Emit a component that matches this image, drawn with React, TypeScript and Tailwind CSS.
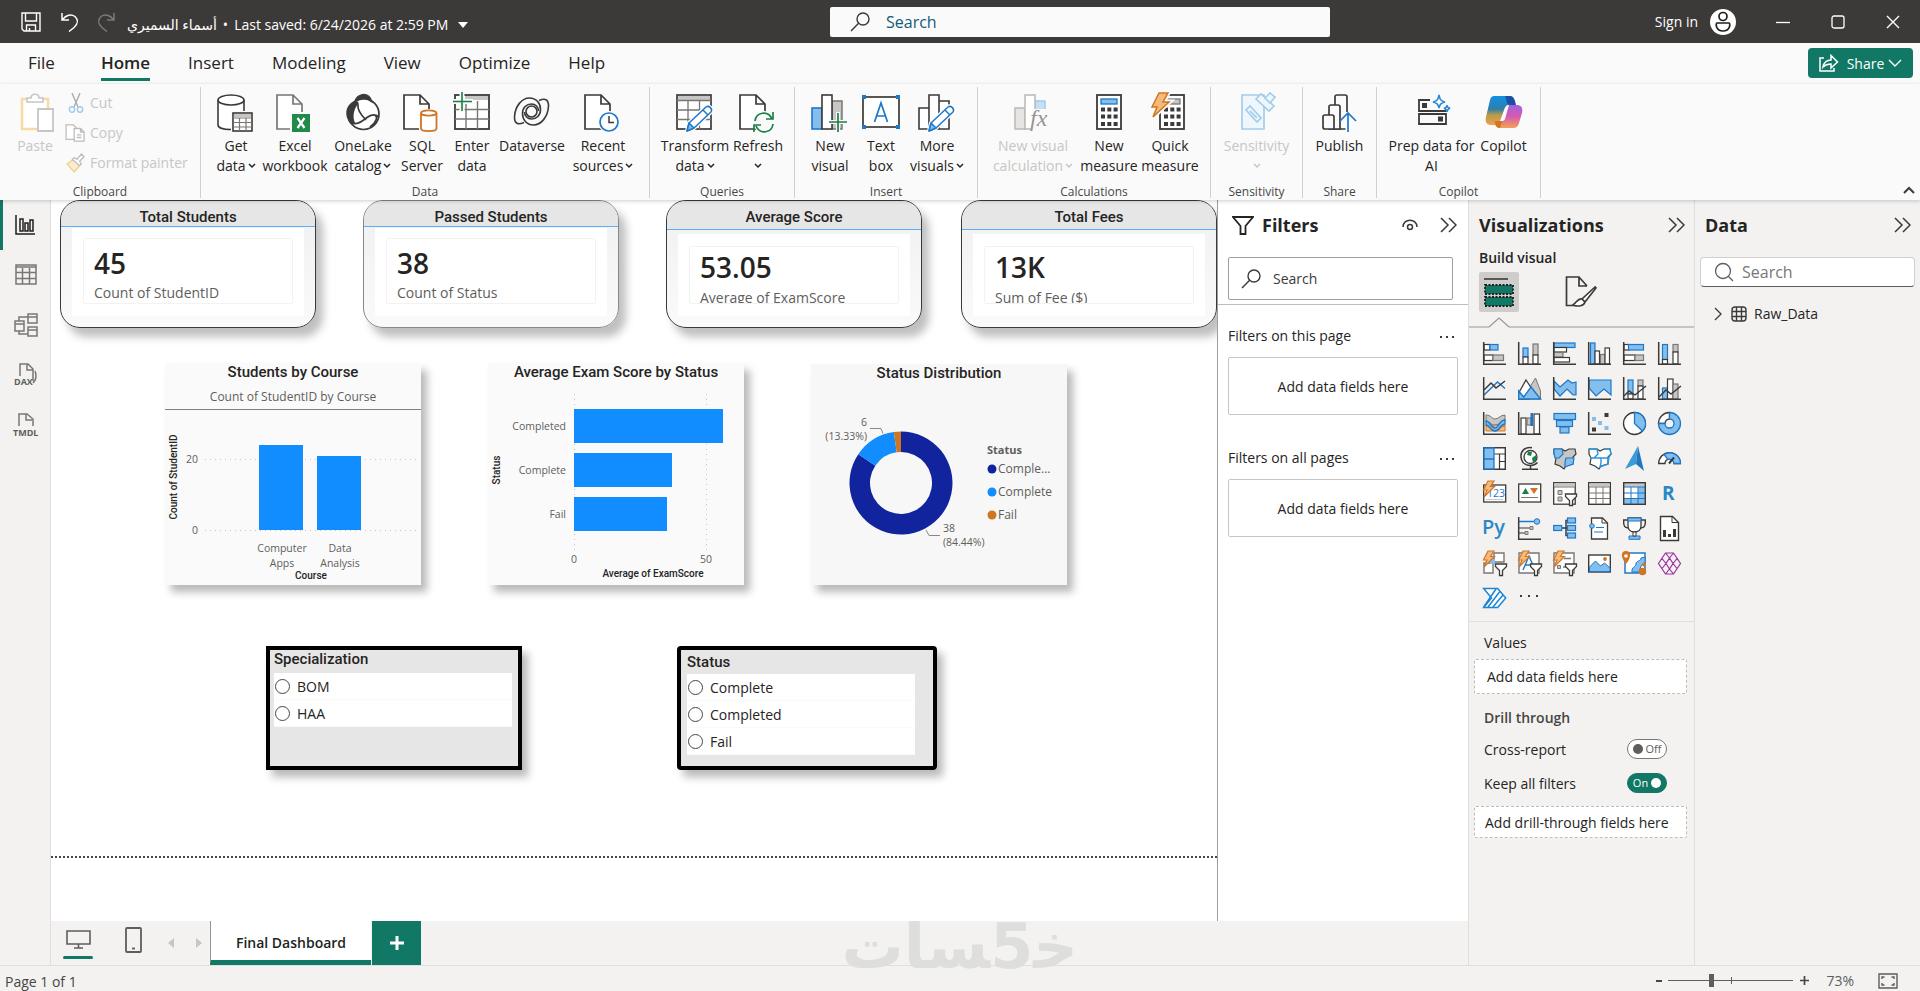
import { ReactNode } from 'react';
import { clsx } from 'clsx';

const DARK = '#3b3a39';
const GRAY = '#797775';
const SOFT = '#c8c6c4';
const BLUE = '#1e78c8';
const SKY = '#83beec';
const GREEN = '#1b7f45';
const ORANGE = '#d07622';
const PEACH = '#f6b97c';

/* ---------- shared icon pieces ---------- */

const Chevron = ({ className }: { className?: string }) => (
    <svg viewBox="0 0 8 6" className={clsx("w-2 h-1.5 inline-block", className)} fill="none" stroke="currentColor" strokeWidth="1.5">
        <path d="M1 1l3 3 3-3" />
    </svg>
);

const DoubleChevron = () => (
    <svg viewBox="0 0 17 16" className="w-[17px] h-4" fill="none" stroke={DARK} strokeWidth="1.5">
        <path d="M1 1l7 7-7 7M9 1l7 7-7 7" />
    </svg>
);

const Magnifier = ({ className }: { className?: string }) => (
    <svg viewBox="0 0 20 20" className={clsx("w-5 h-5 shrink-0", className)} fill="none" stroke={DARK} strokeWidth="1.4">
        <circle cx="13" cy="7" r="6" />
        <path d="M8.6 11.3L1 19" />
    </svg>
);

const Doc = ({ color = DARK }: { color?: string }) => (
    <path d="M1 1h16l9 9v25H1zM17 1v9h9" fill="#fff" stroke={color} strokeWidth="1.7" />
);

const Pencil = () => (
    <g stroke={BLUE} strokeWidth="1.5" strokeLinejoin="round">
        <path d="M11 37l2-8 17-16c3-2 7 2 5 5L18 34z" fill="#fff" stroke="#fff" strokeWidth="4" />
        <path d="M11 37l2-8 17-16c3-2 7 2 5 5L18 34z" fill="#fff" />
        <path d="M11 37l2-8 5 5z" fill={SKY} />
        <path d="M27 16l5 5" />
    </g>
);

const Bolt = () => (
    <path d="M5-1h6L7.500 4.500h4L1 15l3-7H.5z" fill={PEACH} stroke={ORANGE} strokeWidth="1.200" />
);

const MiniFunnel = () => (
    <path d="M12.500 12h11v2.500l-4 4v5h-3v-5l-4-4z" fill="#fff" stroke={DARK} strokeWidth="1.300" />
);

const Axis = () => <path d="M.7 0v22.300H23" fill="none" stroke={DARK} strokeWidth="1.500" />;

interface BarProps {
    x: number;
    y: number;
    w: number;
    h: number;
    tone?: 'blue' | 'gray' | 'white';
}

const Bar = ({ x, y, w, h, tone = 'white' }: BarProps) => (
    <rect
        x={x} y={y} width={w} height={h} strokeWidth="1.2"
        fill={tone === 'blue' ? SKY : tone === 'gray' ? SOFT : '#fff'}
        stroke={tone === 'blue' ? BLUE : tone === 'gray' ? GRAY : DARK}
    />
);

/* ---------- ribbon artwork, 38x40 box ---------- */

const swirl = "M11 28.500C5 31 1.500 30 1.500 23 2 12 9 4 16.500 4 23 4 27.500 9 27.500 15.500c0 6-4 9.500-9 9.500-4 0-7-3-7-7";

const art: Record<string, ReactNode> = {
    getData: (
        <>
            <path d="M1 6v25c0 2.500 5 4.500 13 4.500h1V18h12V6" fill="#fff" stroke={DARK} strokeWidth="1.600" />
            <ellipse cx="14" cy="6" rx="13" ry="5" fill="#fff" stroke={DARK} strokeWidth="1.600" />
            <rect x="14" y="17" width="22" height="20" fill="#fafafa" />
            <rect x="16" y="19" width="19" height="18" fill="#fff" stroke={DARK} strokeWidth="1.600" />
            <path d="M17 21.500h17" stroke={SOFT} strokeWidth="3" />
            <path d="M16 24h19M16 28.500h19M16 33h19M22.500 24v13M29 24v13" stroke={GRAY} strokeWidth="1.200" fill="none" />
        </>
    ),
    excel: (
        <>
            <Doc color={GRAY} />
            <rect x="14" y="18" width="20" height="20" fill="#fafafa" />
            <rect x="16" y="20" width="18" height="18" fill="#1f8a4c" />
            <path d="M21.500 24l7 10M28.500 24l-7 10" stroke="#fff" strokeWidth="2.200" />
        </>
    ),
    oneLake: (
        <>
            <circle cx="19.500" cy="20" r="15.500" fill="#fff" stroke={DARK} strokeWidth="1.700" />
            <path d="M12 6.500C3 9 0 18 4 26c1 3 3 4 7 3-3-7-1-15 4-20z" fill={DARK} />
            <path d="M11 8c1-9 14-11 17 0-5-4-11-4-17 0z" fill={DARK} stroke={DARK} strokeWidth="1.200" />
            <path d="M14 10c-1 6 3 11 8 16M6 28.500c7 3 12-1 17-5 4-3 9-4 12 0M30 21c5 1 2 8-4 12" fill="none" stroke={DARK} strokeWidth="1.700" />
        </>
    ),
    sql: (
        <>
            <Doc />
            <rect x="16" y="15" width="19" height="23" fill="#fafafa" />
            <path d="M18 19v15.500c0 3.500 15.500 3.500 15.500 0V19" fill="#fff" stroke={ORANGE} strokeWidth="1.800" />
            <ellipse cx="25.700" cy="19" rx="7.700" ry="2.700" fill="#fff" stroke={ORANGE} strokeWidth="1.800" />
        </>
    ),
    enter: (
        <>
            <rect x="2" y="1" width="34" height="34" fill="#fff" stroke={DARK} strokeWidth="1.800" />
            <path d="M12 4h23" stroke={SOFT} strokeWidth="4" />
            <path d="M2 15.500h34M2 25h34M13 7v28M24.500 7v28" stroke={GRAY} strokeWidth="1.400" fill="none" />
            <path d="M9-2v20M0 7.500h20" stroke="#fafafa" strokeWidth="5" />
            <path d="M9-2v19M0 7.500h19" stroke={GREEN} strokeWidth="1.600" />
        </>
    ),
    dataverse: (
        <g fill="none" stroke={DARK} strokeWidth="1.600">
            <path d={swirl} />
            <path d={swirl} transform="rotate(180 18.500 17.500)" />
            <circle cx="18.500" cy="17.500" r="5.500" />
        </g>
    ),
    recent: (
        <>
            <Doc />
            <circle cx="25" cy="28" r="11" fill="#fafafa" />
            <circle cx="25" cy="28" r="9" fill="#fff" stroke={BLUE} strokeWidth="1.700" />
            <path d="M25 22v6.500h5" fill="none" stroke={DARK} strokeWidth="1.500" />
        </>
    ),
    transform: (
        <>
            <rect x="1" y="1" width="34" height="34" fill="#fff" stroke={DARK} strokeWidth="1.700" />
            <path d="M2 4h32" stroke={SOFT} strokeWidth="4" />
            <path d="M1 6.500h34M1 16h34M1 25.500h34M12 7v28M23.500 7v28" stroke={GRAY} strokeWidth="1.300" />
            <Pencil />
        </>
    ),
    refresh: (
        <>
            <Doc />
            <circle cx="25" cy="28" r="11" fill="#fafafa" />
            <path d="M16 27c1-9 13-11 17-2M34 18v7h-7M34 30c-1 9-13 11-17 2M15 38v-7h7" fill="none" stroke={GREEN} strokeWidth="1.700" />
        </>
    ),
    newVisual: (
        <>
            <rect x="1" y="14" width="10" height="21" fill={SKY} stroke={BLUE} strokeWidth="1.600" />
            <rect x="21" y="7" width="10" height="28" fill={SOFT} stroke={GRAY} strokeWidth="1.500" />
            <rect x="11" y="1" width="10" height="34" fill="#fff" stroke={DARK} strokeWidth="1.600" />
            <path d="M27 18v20M18 28h18" stroke="#fafafa" strokeWidth="4" />
            <path d="M27 19v19M18 28h18" stroke={GREEN} strokeWidth="1.700" />
        </>
    ),
    textBox: (
        <>
            <rect x="1" y="3" width="36" height="30" fill="#fff" stroke={DARK} strokeWidth="1.700" />
            <path d="M0 1h4v4H0zM34 1h4v4h-4zM0 31h4v4H0zM34 31h4v4h-4z" fill={BLUE} />
            <path d="M12.500 28L19 9l6.500 19M14.500 22h9" fill="none" stroke={BLUE} strokeWidth="1.700" />
        </>
    ),
    moreVisuals: (
        <>
            <path d="M1 14h10v21H1zM21 7h10v28H21zM11 1h10v34H11z" fill="#fff" stroke={DARK} strokeWidth="1.600" />
            <Pencil />
        </>
    ),
    newCalc: (
        <>
            <rect x="1" y="14" width="10" height="21" fill="#e6e5e4" stroke="#bebcba" strokeWidth="1.600" />
            <rect x="21" y="7" width="10" height="20" fill="#c5e0f5" stroke="#9ccbee" strokeWidth="1.500" />
            <rect x="11" y="1" width="10" height="34" fill="#fff" stroke="#bebcba" strokeWidth="1.600" />
            <rect x="18" y="15" width="18" height="22" fill="#fafafa" />
            <text x="16" y="32" fontSize="24" fontStyle="italic" fontFamily="Liberation Serif" fill="#979593">fx</text>
        </>
    ),
    newMeasure: (
        <>
            <rect x="7" y="1" width="24" height="34" fill="#fff" stroke={DARK} strokeWidth="1.800" />
            <rect x="11" y="5" width="16" height="5" fill={SKY} stroke={BLUE} strokeWidth="1.300" />
            <path d="M11 15.500h17M11 22.500h17M11 30h17" stroke={DARK} strokeWidth="4" strokeDasharray="4 2.300" />
        </>
    ),
    quick: (
        <>
            <rect x="9" y="1" width="24" height="34" fill="#fff" stroke={DARK} strokeWidth="1.800" />
            <rect x="13" y="5" width="16" height="5" fill={SOFT} stroke={GRAY} strokeWidth="1.300" />
            <path d="M13 15.500h17M13 22.500h17M13 30h17" stroke={DARK} strokeWidth="4" strokeDasharray="4 2.300" />
            <path d="M8-1h9l-5 9h6L2 23l4-10H1z" fill={PEACH} stroke="#fafafa" strokeWidth="5" />
            <path d="M8-1h9l-5 9h6L2 23l4-10H1z" fill={PEACH} stroke={ORANGE} strokeWidth="1.500" />
        </>
    ),
    sensitivity: (
        <g fill="#eff7fd" stroke="#a3cdec" strokeWidth="1.700">
            <path d="M4 1h22v34H4z" />
            <path d="M8 16l4-4 11 12-4 4zM12 17l7 7" />
            <path d="M18 5l5-5 13 12-5 5z" />
            <path d="M27 4l5-5 5 4-5 6z" />
        </g>
    ),
    publish: (
        <>
            <g fill="#fafafa" stroke={DARK} strokeWidth="1.700">
                <path d="M14 35V3c0-1 1-2 2-2h8c1 0 2 1 2 2v32z" />
                <path d="M8 35V13c0-1 1-2 2-2h7c1 0 2 1 2 2v22z" />
                <path d="M2 33V23c0-1 1-2 2-2h7c1 0 2 1 2 2v12H4c-1 0-2-1-2-2z" />
            </g>
            <path d="M27 18v20" stroke="#fafafa" strokeWidth="5" />
            <path d="M27 38V19M19 27l8-8 8 8" fill="none" stroke={BLUE} strokeWidth="1.700" />
        </>
    ),
    prep: (
        <>
            <path d="M17 6H6v11h27v-3M6 20h27v10H6z" fill="none" stroke={DARK} strokeWidth="1.800" />
            <rect x="9" y="9" width="5" height="5" fill={DARK} />
            <rect x="25" y="22.500" width="5" height="5" fill={DARK} />
            <path d="M26 1c1 5 2 6 6 7-4 1-5 2-6 6-1-4-2-5-6-6 4-1 5-2 6-7zM34 11c0 2 1 3 3 3-2 1-3 2-3 4 0-2-1-3-3-4 2 0 3-1 3-3z" fill="#fff" stroke="#2b88d8" strokeWidth="1.500" />
        </>
    ),
    copilot: (
        <>
            <defs>
                <linearGradient id="cp-left" x1="0" y1="0" x2="0" y2="1">
                    <stop offset="0" stopColor="#118fe6" />
                    <stop offset=".45" stopColor="#2f7fa8" />
                    <stop offset=".65" stopColor="#b59c4c" />
                    <stop offset="1" stopColor="#f0a04b" />
                </linearGradient>
                <linearGradient id="cp-right" x1="0" y1="0" x2="0" y2="1">
                    <stop offset="0" stopColor="#a35fe0" />
                    <stop offset=".5" stopColor="#d65bb0" />
                    <stop offset="1" stopColor="#f2a255" />
                </linearGradient>
            </defs>
            <path d="M9 2h15c3 0 4 2 5 5l1 4h-6c-3 0-4 2-5 5l-3 9c-1 4-3 6-6 6H6c-5 0-6-4-5-8L5 6c1-3 2-4 4-4z" fill="url(#cp-left)" />
            <path d="M20 2h5c3 0 4 2 5 5l1 4h-6c-4 0-3-5-5-9z" fill="#1a4fa6" />
            <path d="M24 11h8c5 0 6 4 5 8l-3 10c-1 4-3 5-6 5H15c-3 0-4-2-5-5l-1-2h5c3 0 4-2 5-5l2-7c1-3 1-4 3-4z" fill="url(#cp-right)" />
            <path d="M10 27h7l-2 7c-4 0-5-3-5-7z" fill={ORANGE} />
            <path d="M21 13c1-2 2-2 3-2l-4 14c-1 2-2 2-5 2z" fill="#fafafa" />
        </>
    ),
};

const RibbonArt = ({ name }: { name: string }) => (
    <svg viewBox="0 -2 38 42" className="w-[38px] h-[42px] mb-[2px] overflow-visible shrink-0">{art[name]}</svg>
);

interface Tool {
    icon: string;
    lines: string[];
    width: string;
    menu?: boolean;
    disabled?: boolean;
}

const groups: { label: string; width: string; tools: Tool[] }[] = [
    {
        label: "Data", width: "w-[449px]", tools: [
            { icon: 'getData', lines: ["Get", "data"], width: "w-14", menu: true },
            { icon: 'excel', lines: ["Excel", "workbook"], width: "w-[62px]" },
            { icon: 'oneLake', lines: ["OneLake", "catalog"], width: "w-[74px]", menu: true },
            { icon: 'sql', lines: ["SQL", "Server"], width: "w-11" },
            { icon: 'enter', lines: ["Enter", "data"], width: "w-14" },
            { icon: 'dataverse', lines: ["Dataverse"], width: "w-16" },
            { icon: 'recent', lines: ["Recent", "sources"], width: "w-[78px]", menu: true },
        ],
    },
    {
        label: "Queries", width: "w-[145px]", tools: [
            { icon: 'transform', lines: ["Transform", "data"], width: "w-[72px]", menu: true },
            { icon: 'refresh', lines: ["Refresh", ""], width: "w-[54px]", menu: true },
        ],
    },
    {
        label: "Insert", width: "w-[183px]", tools: [
            { icon: 'newVisual', lines: ["New", "visual"], width: "w-[54px]" },
            { icon: 'textBox', lines: ["Text", "box"], width: "w-12" },
            { icon: 'moreVisuals', lines: ["More", "visuals"], width: "w-16", menu: true },
        ],
    },
    {
        label: "Calculations", width: "w-[233px]", tools: [
            { icon: 'newCalc', lines: ["New visual", "calculation"], width: "w-[90px]", menu: true, disabled: true },
            { icon: 'newMeasure', lines: ["New", "measure"], width: "w-[62px]" },
            { icon: 'quick', lines: ["Quick", "measure"], width: "w-[60px]" },
        ],
    },
    {
        label: "Sensitivity", width: "w-[92px]", tools: [
            { icon: 'sensitivity', lines: ["Sensitivity", ""], width: "w-[84px]", menu: true, disabled: true },
        ],
    },
    {
        label: "Share", width: "w-[74px]", tools: [
            { icon: 'publish', lines: ["Publish"], width: "w-16" },
        ],
    },
    {
        label: "Copilot", width: "w-[164px]", tools: [
            { icon: 'prep', lines: ["Prep data for", "AI"], width: "w-[90px]" },
            { icon: 'copilot', lines: ["Copilot"], width: "w-[54px]" },
        ],
    },
];

const ToolButton = ({ tool }: { tool: Tool }) => (
    <button
        disabled={tool.disabled}
        className={clsx(
            "flex flex-col items-center shrink-0 whitespace-nowrap text-[14px] leading-5",
            tool.width,
            tool.disabled ? "text-[#c8c6c4]" : "text-[#252423]"
        )}
    >
        <RibbonArt name={tool.icon} />
        {tool.lines.map((line, i) => (
            <span key={i} className="flex items-center gap-[2px] h-5">
                {line}
                {tool.menu && i === tool.lines.length - 1 && <Chevron />}
            </span>
        ))}
    </button>
);

const TitleBar = () => (
    <header className="flex items-center h-[43px] bg-[#3b3a39] text-white">
        <div className="flex items-center flex-[809] pl-[21px]">
            <button aria-label="Save" className="mr-5">
                <svg viewBox="0 0 20 20" className="w-5 h-5" fill="none" stroke="#fff" strokeWidth="1.400">
                    <path d="M1 1h18v18H3l-2-2zM4.500 1v8h11V1M5.500 19v-6h9v6M8.500 19v-3" />
                </svg>
            </button>
            <button aria-label="Undo" className="mr-[18px]">
                <svg viewBox="0 0 18 20" className="w-[18px] h-5" fill="none" stroke="#fff" strokeWidth="1.500">
                    <path d="M1 1v7h7M1.500 7.500C5 3 10 1.500 14 4.500c4 4 3 7-1 11L8 19.500" />
                </svg>
            </button>
            <button aria-label="Redo" className="mr-3" disabled>
                <svg viewBox="0 0 18 20" className="w-[18px] h-5" fill="none" stroke="#7b7a78" strokeWidth="1.500">
                    <path d="M17 1v7h-7M16.500 7.500C13 3 8 1.500 4 4.500c-4 4-3 7 1 11l5 4" />
                </svg>
            </button>
            <button className="flex items-center gap-[6px] pt-[6px] text-[14px] whitespace-nowrap">
                <span dir="rtl">أسماء السميري</span>
                <span>•</span>
                <span>Last saved: 6/24/2026 at 2:59 PM</span>
                <svg viewBox="0 0 10 6" className="w-[10px] h-[6px] ml-1"><path d="M0 0h10L5 6z" fill="#fff" /></svg>
            </button>
        </div>
        <label className="flex items-center w-[500px] h-[30px] px-5 gap-4 bg-[#fafafa] rounded-xs">
            <Magnifier />
            <input aria-label="Search" placeholder="Search" className="w-full bg-transparent outline-none text-[16px] placeholder:text-[#125a78]" />
        </label>
        <div className="flex items-center justify-end flex-[570] pr-5">
            <button className="flex items-center gap-3 text-[14px]">
                Sign in
                <svg viewBox="0 0 26 26" className="w-[26px] h-[26px]" fill="none" stroke="#201f1e" strokeWidth="1.700">
                    <circle cx="13" cy="13" r="13" fill="#fff" stroke="none" />
                    <circle cx="13" cy="7.500" r="4" />
                    <path d="M7 14h12c1.500 0 1.500 8-6 8s-7.500-8-6-8z" />
                </svg>
            </button>
            <button aria-label="Minimize" className="ml-10">
                <svg viewBox="0 0 14 14" className="w-[14px] h-[14px]" stroke="#fff" strokeWidth="1.300"><path d="M0 7.500h14" /></svg>
            </button>
            <button aria-label="Maximize" className="ml-[41px]">
                <svg viewBox="0 0 14 14" className="w-[14px] h-[14px]" stroke="#fff" strokeWidth="1.300" fill="none"><rect x="1" y="1" width="12" height="12" rx="2" /></svg>
            </button>
            <button aria-label="Close" className="ml-[41px]">
                <svg viewBox="0 0 14 14" className="w-[14px] h-[14px]" stroke="#fff" strokeWidth="1.400"><path d="M1 1l12 12M13 1L1 13" /></svg>
            </button>
        </div>
    </header>
);

const menuTabs = ["File", "Home", "Insert", "Modeling", "View", "Optimize", "Help"];

const MenuBar = () => (
    <nav className="flex items-start h-[41px] pl-7 pr-[7px] gap-[38px] bg-[#fafafa]">
        {menuTabs.map((tab) => (
            <button
                key={tab}
                className={clsx(
                    "h-[38px] pt-1 text-[17px] leading-8 text-[#252423] border-b-[3px]",
                    tab === "File" && "mr-2",
                    tab === "Home" ? "border-[#117865] font-semibold" : "border-transparent"
                )}
            >
                {tab}
            </button>
        ))}
        <button className="flex items-center justify-center gap-2 ml-auto mt-[5px] w-[105px] h-[30px] rounded-sm bg-[#117865] text-white text-[14px]">
            <svg viewBox="0 0 20 18" className="w-5 h-[18px]" fill="none" stroke="#fff" strokeWidth="1.500">
                <path d="M5 4H1v13h14v-3M4 13c1-5 4-7 8-7V1.500L18.500 8 12 14v-4c-4 0-6 1-8 3z" />
            </svg>
            <span className="flex items-center gap-1">
                Share
                <svg viewBox="0 0 14 8" className="w-[14px] h-2" fill="none" stroke="#fff" strokeWidth="1.400"><path d="M1 1l6 6 6-6" /></svg>
            </span>
        </button>
    </nav>
);

const GroupLabel = ({ children }: { children: ReactNode }) => (
    <h2 className="text-center text-[12px] leading-3 text-[#484644]">{children}</h2>
);

const ClipboardGroup = () => (
    <section className="flex flex-col w-[201px] border-r border-[#d2d0ce] text-[#c8c6c4]">
        <div className="flex flex-1 pl-[17px]">
            <button disabled className="flex flex-col items-center w-9 pt-[5px] text-[14px] leading-5">
                <svg viewBox="-3 -2 38 42" className="w-[38px] h-[42px] mb-[2px] shrink-0" fill="none">
                    <path d="M3 5h26v30H3z" fill="#fff" stroke="#f5dca6" strokeWidth="2.500" />
                    <path d="M8 8V4h4c0-5 8-5 8 0h4v4z" fill="#fff" stroke={SOFT} strokeWidth="1.600" />
                    <path d="M19 15h15v22H19z" fill="#fff" stroke={SOFT} strokeWidth="1.800" />
                </svg>
                Paste
            </button>
            <div className="flex flex-col ml-[14px] pt-px text-[14px] leading-5">
                <button disabled className="flex items-center gap-[5px] h-[30px]">
                    <svg viewBox="0 0 18 20" className="w-[18px] h-5" fill="none" strokeWidth="1.400">
                        <path d="M5 0l6 14M13 0L7 14" stroke={GRAY} opacity=".6" />
                        <circle cx="5" cy="16.500" r="2.700" stroke="#9ccbee" />
                        <circle cx="13" cy="16.500" r="2.700" stroke="#9ccbee" />
                    </svg>
                    Cut
                </button>
                <button disabled className="flex items-center gap-[5px] h-[30px]">
                    <svg viewBox="0 0 20 20" className="w-[18px] h-5 overflow-visible" fill="#fff" stroke="#bebcba" strokeWidth="1.400">
                        <path d="M-1 1h8l3 3v13H-1z" />
                        <path d="M8 5h7l4 4v10H8zM15 5v4h4M11 12h5M11 15h5" />
                    </svg>
                    Copy
                </button>
                <button disabled className="flex items-center gap-[5px] h-[30px] whitespace-nowrap">
                    <svg viewBox="0 0 20 20" className="w-[18px] h-5 overflow-visible" fill="#fff" strokeWidth="1.400">
                        <path d="M0 11l7-5 7 7-6 7z" stroke="#f0cf93" fill="#fbeccd" />
                        <path d="M6 6l2-2 3 2 5-6 3 3-5 5 2 3-2 2z" stroke="#bebcba" />
                    </svg>
                    Format painter
                </button>
            </div>
        </div>
        <GroupLabel>Clipboard</GroupLabel>
    </section>
);

const Ribbon = () => (
    <div className="relative z-10 flex h-[116px] pt-[3px] pb-[2px] bg-[#fafafa] shadow-[0_1px_4px_rgba(0,0,0,0.2)]">
        <ClipboardGroup />
        {groups.map((group) => (
            <section key={group.label} className={clsx("flex flex-col border-r border-[#d2d0ce]", group.width)}>
                <div className="flex flex-1 justify-center pt-[5px]">
                    {group.tools.map((tool) => <ToolButton key={tool.icon} tool={tool} />)}
                </div>
                <GroupLabel>{group.label}</GroupLabel>
            </section>
        ))}
        <button aria-label="Collapse ribbon" className="self-end ml-auto mr-[5px] mb-1">
            <svg viewBox="0 0 12 8" className="w-3 h-2" fill="none" stroke={DARK} strokeWidth="2"><path d="M1 7l5-5 5 5" /></svg>
        </button>
    </div>
);

/* ---------- left rail ---------- */

const railIcons: { name: string; icon: ReactNode }[] = [
    { name: "Report view", icon: <path d="M2 2v19h19M6 6h3v12H6zM11 10h3v8h-3zM16 7h3v11h-3z" stroke="#201f1e" strokeWidth="1.500" /> },
    { name: "Table view", icon: <path d="M2 2h20v19H2zM2 4h20M2 9.500h20M2 15.500h20M8.500 5v16M15.500 5v16" /> },
    { name: "Model view", icon: <path d="M1 8h9v10H1zM1 11h9M14 1h9v9h-9zM14 4h9M14 14h9v9h-9zM14 17h9M5 8V4h9M5 18v3h9" /> },
    {
        name: "DAX query view", icon: (
            <>
                <path d="M6 13V1h8l5 5v12M13 1v6h6M21 8c2 5 1 9-2 12" />
                <text x="0" y="22" fontSize="9" fontWeight="700" fill="#605e5c" stroke="none">DAX</text>
            </>
        ),
    },
    {
        name: "TMDL view", icon: (
            <>
                <path d="M5 13V1h8l6 5v7M12 1v6h6" />
                <text x="-1" y="23" fontSize="9" fontWeight="700" fill="#605e5c" stroke="none">TMDL</text>
            </>
        ),
    },
];

const Rail = () => (
    <nav className="flex flex-col w-[51px] shrink-0 bg-[#f3f2f1] border-r border-[#e1dfdd]">
        {railIcons.map((item, i) => (
            <button
                key={item.name}
                aria-label={item.name}
                className={clsx(
                    "flex items-center justify-center h-[50px] pr-[2px] border-l-[3px]",
                    i === 0 ? "border-[#117865]" : "border-transparent"
                )}
            >
                <svg viewBox="0 0 24 24" className="w-6 h-6 overflow-visible" fill="none" stroke="#797775" strokeWidth="1.500">{item.icon}</svg>
            </button>
        ))}
    </nav>
);

/* ---------- report canvas ---------- */

interface KpiProps {
    title: string;
    value: string;
    label: string;
    margin: string;
    tall?: boolean;
    border?: string;
}

const KpiCard = ({ title, value, label, margin, tall, border = "border-[#3b3a39]" }: KpiProps) => (
    <article className={clsx(
        "flex flex-col flex-1 h-32 border rounded-[20px] overflow-hidden bg-linear-to-b from-[#f0f0f0] to-[#fafafa] shadow-[7px_9px_8px_rgba(0,0,0,0.25)]",
        margin, border
    )}>
        <h3 className={clsx(
            "text-center shrink-0 bg-[#e6e6e6] border-b border-[#58aefb] text-[15px] leading-[18px] font-medium text-[#252423] font-[Roboto,sans-serif] pt-[7px]",
            tall ? "h-[29px]" : "h-[26px]"
        )}>
            {title}
        </h3>
        <div className={clsx("flex-1 min-h-0 mx-[11px] mb-[11px] px-[11px] bg-white", tall ? "mt-1 pt-3 pb-3" : "mt-px pt-[10px] pb-3")}>
            <div className="h-full px-[10px] border border-[#f3f2f1] rounded-xs overflow-hidden">
                <p className={clsx("font-semibold text-[28px] leading-9 text-[#252423]", tall ? "pt-[2px] pb-[3px]" : "pt-[6px] pb-[2px]")}>{value}</p>
                <p className="text-[14px] leading-5 text-[#605e5c] whitespace-nowrap">{label}</p>
            </div>
        </div>
    </article>
);

const tile = "w-64 bg-[#fafafa] shadow-[6px_7px_8px_rgba(0,0,0,0.28)]";
const tileTitle = "text-center text-[15px] leading-[18px] font-medium text-[#252423] font-[Roboto,sans-serif]";
const axisTitle = { fontFamily: 'Roboto, sans-serif', fontWeight: 500, fontSize: 10, fill: '#252423' };

const CourseChart = () => (
    <article className={clsx(tile, "flex flex-col")}>
        <h3 className={tileTitle}>Students by Course</h3>
        <p className="mt-2 pb-1 text-center text-[12px] leading-4 text-[#605e5c] border-b border-[#808080]">Count of StudentID by Course</p>
        <svg viewBox="0 0 256 175" className="w-full" fontSize="10.500" fill="#605e5c">
            <path d="M40 49.500h213M40 120.500h213" stroke="#c8c6c4" strokeDasharray="1 4" />
            <rect x="94" y="35" width="44" height="85" fill="#118dff" />
            <rect x="152" y="46" width="44" height="74" fill="#118dff" />
            <text x="33" y="53" textAnchor="end">20</text>
            <text x="33" y="124" textAnchor="end">0</text>
            <text x="117" y="142" textAnchor="middle">Computer</text>
            <text x="117" y="157" textAnchor="middle">Apps</text>
            <text x="175" y="142" textAnchor="middle">Data</text>
            <text x="175" y="157" textAnchor="middle">Analysis</text>
            <text x="146" y="169" textAnchor="middle" style={axisTitle}>Course</text>
            <text transform="translate(12 67) rotate(-90)" textAnchor="middle" style={axisTitle}>Count of StudentID</text>
        </svg>
    </article>
);

const scores = [
    { status: "Completed", y: 28, length: 149 },
    { status: "Complete", y: 72, length: 98 },
    { status: "Fail", y: 116, length: 93 },
];

const ScoreChart = () => (
    <article className={clsx(tile, "flex flex-col")}>
        <h3 className={tileTitle}>Average Exam Score by Status</h3>
        <svg viewBox="0 0 256 204" className="w-full" fontSize="10.500" fill="#605e5c">
            <path d="M86.500 13v156M218.500 13v156" stroke="#c8c6c4" strokeDasharray="1 4" />
            {scores.map((s) => (
                <g key={s.status}>
                    <rect x="86" y={s.y} width={s.length} height="34" fill="#118dff" />
                    <text x="78" y={s.y + 21} textAnchor="end">{s.status}</text>
                </g>
            ))}
            <text x="86" y="182" textAnchor="middle">0</text>
            <text x="218" y="182" textAnchor="middle">50</text>
            <text x="165" y="196" textAnchor="middle" style={axisTitle}>Average of ExamScore</text>
            <text transform="translate(12 89) rotate(-90)" textAnchor="middle" style={axisTitle}>Status</text>
        </svg>
    </article>
);

const slices = [
    { from: 0, to: 304, color: '#12239e' },
    { from: 304, to: 352, color: '#118dff' },
    { from: 352, to: 360, color: ORANGE },
];

const legend = [
    { label: "Comple...", color: '#12239e', y: 87 },
    { label: "Complete", color: '#118dff', y: 110 },
    { label: "Fail", color: ORANGE, y: 133 },
];

// ring segment between two clockwise angles, starting at 12 o'clock
const ringPath = (from: number, to: number, outer = 51.5, inner = 31) => {
    const at = (deg: number, r: number) => {
        const a = ((deg - 90) * Math.PI) / 180;
        return `${(r * Math.cos(a)).toFixed(2)} ${(r * Math.sin(a)).toFixed(2)}`;
    };
    const large = to - from > 180 ? 1 : 0;
    return `M${at(from, outer)}A${outer} ${outer} 0 ${large} 1 ${at(to, outer)}L${at(to, inner)}A${inner} ${inner} 0 ${large} 0 ${at(from, inner)}Z`;
};

const StatusChart = () => (
    <article className="flex flex-col w-64 mt-px bg-[#f7f7f7] shadow-[6px_7px_8px_rgba(0,0,0,0.28)]">
        <h3 className={tileTitle}>Status Distribution</h3>
        <svg viewBox="0 0 256 203" className="w-full" fontSize="10.500" fill="#605e5c">
            <g transform="translate(90 101)">
                {slices.map((s) => <path key={s.color} d={ringPath(s.from, s.to)} fill={s.color} />)}
            </g>
            <path d="M59 46.500h11l2 5M115 148l3 5.500h11" fill="none" stroke="#8a8886" />
            <text x="56" y="44" textAnchor="end">6</text>
            <text x="56" y="58" textAnchor="end">(13.33%)</text>
            <text x="132" y="150">38</text>
            <text x="132" y="164">(84.44%)</text>
            <text x="176" y="72" fontSize="11" fontWeight="700">Status</text>
            {legend.map((item) => (
                <g key={item.label}>
                    <circle cx="181" cy={item.y} r="4.500" fill={item.color} />
                    <text x="187" y={item.y + 4} fontSize="12">{item.label}</text>
                </g>
            ))}
        </svg>
    </article>
);

interface SlicerProps {
    title: string;
    options: string[];
    className: string;
    listClass: string;
}

const Slicer = ({ title, options, className, listClass }: SlicerProps) => (
    <fieldset className={clsx("h-[124px] border-4 border-black bg-[#e6e6e6] shadow-[6px_7px_8px_rgba(0,0,0,0.28)]", className)}>
        <div className="text-[15px] leading-[18px] font-medium text-[#252423] font-[Roboto,sans-serif]">{title}</div>
        <div className={clsx("bg-white", listClass)}>
            {options.map((option) => (
                <label key={option} className="flex items-center gap-[7px] h-[27px] pl-px text-[14px] text-[#252423] border-b border-[#fafafa]">
                    <input type="radio" name={title} className="appearance-none w-[15px] h-[15px] rounded-full border border-[#484644]" />
                    {option}
                </label>
            ))}
        </div>
    </fieldset>
);

const Canvas = () => (
    <div className="flex-1 min-w-0 overflow-hidden bg-white">
        <div className="flex pl-[9px]">
            <KpiCard title="Total Students" value="45" label="Count of StudentID" margin="" />
            <KpiCard title="Passed Students" value="38" label="Count of Status" margin="ml-[47px]" border="border-[#8a8886]" />
            <KpiCard title="Average Score" value="53.05" label="Average of ExamScore" margin="ml-[47px]" tall />
            <KpiCard title="Total Fees" value="13K" label="Sum of Fee ($)" margin="ml-[39px]" tall />
        </div>
        <div className="flex gap-[67px] mt-[35px] pl-[114px]">
            <CourseChart />
            <ScoreChart />
            <StatusChart />
        </div>
        <div className="flex mt-[61px] pl-[215px]">
            <Slicer title="Specialization" options={["BOM", "HAA"]} className="w-64 px-1" listClass="mt-[5px] mr-[2px]" />
            <Slicer title="Status" options={["Complete", "Completed", "Fail"]} className="w-[260px] ml-[155px] px-[6px] pt-[3px] rounded-sm" listClass="mt-[3px] mr-3" />
        </div>
        <div className="mt-[86px] border-t-2 border-dotted border-[#484644]" />
    </div>
);

const FilterSection = ({ title }: { title: string }) => (
    <section className="px-[10px]">
        <div className="flex items-center justify-between h-5 text-[14px] text-[#252423]">
            <h3>{title}</h3>
            <button aria-label={`${title} options`} className="pt-1 pr-1">
                <svg viewBox="0 0 14 2" className="w-[14px] h-[2px]" fill={DARK}><path d="M0 0h2v2H0zM6 0h2v2H6zM12 0h2v2h-2z" /></svg>
            </button>
        </div>
        <div className="flex items-center justify-center mt-3 mb-8 h-[58px] border border-[#c8c6c4] rounded-xs text-[14px] text-[#252423]">
            Add data fields here
        </div>
    </section>
);

const FiltersPane = () => (
    <aside className="w-[251px] shrink-0 bg-white border-l border-[#a19f9d]">
        <div className="flex items-center h-12 pt-[2px] pl-[14px] pr-[11px]">
            <svg viewBox="0 0 22 20" className="w-[22px] h-5" fill="none" stroke="#252423" strokeWidth="1.800"><path d="M1 2h20l-7.500 9v8h-5v-8z" /></svg>
            <h2 className="ml-2 text-[18px] font-bold text-[#252423]">Filters</h2>
            <button aria-label="Show filters" className="ml-auto mr-[22px]">
                <svg viewBox="0 0 16 12" className="w-4 h-3" fill="none" stroke={DARK} strokeWidth="1.500"><path d="M1 8c0-9 14-9 14 0" /><circle cx="8" cy="8" r="2.500" /></svg>
            </button>
            <button aria-label="Collapse filters"><DoubleChevron /></button>
        </div>
        <div className="pl-[10px] pr-[15px] pt-[9px] pb-1 border-b border-[#bebbb8]">
            <label className="flex items-center gap-3 h-[43px] px-3 border border-[#a19f9d] rounded-xs">
                <Magnifier />
                <input aria-label="Search filters" placeholder="Search" className="w-full outline-none text-[14px] placeholder:text-[#3b3a39]" />
            </label>
        </div>
        <div className="pt-5">
            <FilterSection title="Filters on this page" />
            <FilterSection title="Filters on all pages" />
        </div>
    </aside>
);

/* ---------- visual gallery, 23x23 icons ---------- */

const visuals: { name: string; icon: ReactNode }[] = [
    { name: "Stacked bar", icon: <><Bar x={1} y={2.5} w={6} h={5.5} /><Bar x={7} y={2.5} w={8} h={5.5} tone="blue" /><Bar x={1} y={13} w={9} h={5.5} /><Bar x={10} y={13} w={10.5} h={5.5} tone="gray" /><Axis /></> },
    { name: "Stacked column", icon: <><Bar x={5} y={6} w={5} h={9} tone="blue" /><Bar x={5} y={15} w={5} h={7} /><Bar x={15} y={2} w={5} h={11} tone="gray" /><Bar x={15} y={13} w={5} h={9} /><Axis /></> },
    { name: "Clustered bar", icon: <><Bar x={1} y={1} w={21} h={4.5} tone="blue" /><Bar x={1} y={5.5} w={12.5} h={4.5} /><Bar x={1} y={10.5} w={9} h={4.5} tone="gray" /><Bar x={1} y={15.5} w={15.5} h={4.5} /><Axis /></> },
    { name: "Clustered column", icon: <><Bar x={2.5} y={1} w={4.5} h={21} tone="blue" /><Bar x={7} y={9} w={4.5} h={13} /><Bar x={12.5} y={12.5} w={4.5} h={9.5} tone="gray" /><Bar x={17} y={6} w={4.5} h={16} /><Axis /></> },
    { name: "100% stacked bar", icon: <><Bar x={1} y={2.5} w={5} h={5.5} /><Bar x={5.5} y={2.5} w={15} h={5.5} tone="blue" /><Bar x={1} y={13} w={11} h={5.5} /><Bar x={12} y={13} w={8.5} h={5.5} tone="gray" /><Axis /></> },
    { name: "100% stacked column", icon: <><Bar x={4.5} y={2.5} w={5} h={15} tone="blue" /><Bar x={4.5} y={17.5} w={5} h={4.5} /><Bar x={15} y={2.5} w={5} h={7.5} tone="gray" /><Bar x={15} y={10} w={5} h={12} /><Axis /></> },
    { name: "Line", icon: <><path d="M1 18L14.500 5 22 11.500" fill="none" stroke={BLUE} strokeWidth="1.500" /><path d="M1 13l7-7 5 5 9-7" fill="none" stroke={DARK} strokeWidth="1.500" /><Axis /></> },
    { name: "Area", icon: <><path d="M10 13l7.500-12L22.500 14v8H10z" fill={SOFT} stroke={GRAY} /><path d="M.7 16L8 3l6 9-3 10H.7z" fill="#fff" stroke={DARK} strokeWidth="1.300" /><path d="M.7 22V14l5 6L13 10l9.500 12z" fill={SKY} stroke={BLUE} strokeWidth="1.400" /></> },
    { name: "Stacked area", icon: <><path d="M1 4l6 6 8-7 4 3 4-1v13l-3 0-6-6-7 7-6-7z" fill={SKY} stroke={BLUE} strokeWidth="1.200" /><Axis /></> },
    { name: "100% area", icon: <><path d="M1 3h22v15l-7-6-8 7-7-8z" fill={SKY} stroke={BLUE} strokeWidth="1.200" /><Axis /></> },
    { name: "Line and stacked column", icon: <><Bar x={5} y={3} w={5} h={14} tone="blue" /><Bar x={5} y={17} w={5} h={5} /><Bar x={15} y={3} w={5} h={6} tone="gray" /><Bar x={15} y={9} w={5} h={13} /><path d="M1 19l5-5 6 4 11-9" fill="none" stroke={DARK} strokeWidth="1.400" /><Axis /></> },
    { name: "Line and clustered column", icon: <><Bar x={4.5} y={11} w={5} h={11} tone="blue" /><Bar x={9.5} y={2} w={5.5} h={20} /><Bar x={15} y={7} w={5} h={15} tone="gray" /><path d="M1 20l7-7 5 4 10-8" fill="none" stroke={DARK} strokeWidth="1.400" /><Axis /></> },
    { name: "Ribbon", icon: <><path d="M3 13h19v6H3z" fill={PEACH} stroke={ORANGE} /><path d="M3 14c4 0 4 5 9 5s5-5 10-5" fill="none" stroke={ORANGE} /><path d="M3 3c5 0 6 4 9 4 4 0 5-4 10-4v6c-5 0-5 4-10 4-4 0-4-3-9-3z" fill={SOFT} stroke={GRAY} /><path d="M3 9c4 0 5 7 9 7s4-8 10-8v4c-5 0-5 7-10 7s-5-6-9-6z" fill={SKY} stroke={BLUE} strokeWidth="1.300" /><Axis /></> },
    { name: "Waterfall", icon: <><Bar x={3} y={6} w={5} h={16} /><Bar x={9} y={6} w={4} h={7} tone="gray" /><path d="M12.500 1h2.500v13h-2.500z" fill={BLUE} /><Bar x={16} y={2} w={5.5} h={20} /><Axis /></> },
    { name: "Funnel", icon: <><Bar x={1} y={1.5} w={21.5} h={6} tone="blue" /><Bar x={3.5} y={8.5} w={16} h={6} tone="blue" /><Bar x={7} y={15} w={9} h={6} tone="blue" /></> },
    { name: "Scatter", icon: <><path d="M16.500 1h4v4h-4zM4 15.500h4v4H4z" fill={DARK} /><path d="M4 5h4v4H4zM10 9h4v4h-4zM16.500 14h4v4h-4z" fill={SKY} /><Axis /></> },
    { name: "Pie", icon: <><circle cx="11.500" cy="11.500" r="11" fill="#fff" stroke={DARK} strokeWidth="1.300" /><path d="M11.500.5a11 11 0 018 18.500l-8-7.500z" fill={SKY} stroke={BLUE} strokeWidth="1.300" /></> },
    { name: "Donut", icon: <><path d="M11.500.5v6.500a4.500 4.500 0 00-4.500 4.500H.5a11 11 0 0111-11z" fill="#fff" stroke={DARK} strokeWidth="1.300" /><path d="M11.500.5a11 11 0 11-11 11H7a4.500 4.500 0 104.500-4.500z" fill={SKY} stroke={BLUE} strokeWidth="1.300" /></> },
    { name: "Treemap", icon: <><path d="M.7.7h21.600v21.600H.7z" fill="#fff" stroke={DARK} strokeWidth="1.400" /><path d="M1 1h10v21H1zM1 12h10" fill={SKY} stroke={BLUE} strokeWidth="1.300" /><path d="M11.500 7h11M16.500 7v15M16.500 14.500h6" stroke={DARK} strokeWidth="1.200" /></> },
    { name: "Map", icon: <><circle cx="12.500" cy="10" r="6.500" fill="#fff" stroke={DARK} strokeWidth="1.300" /><path d="M10 5l4 0-1 4-4-1zM14 11l4-3v5l-3 3z" fill={GREEN} /><path d="M14 .7C7-.5 2.500 4 3 10c.5 6 5 8.500 9.500 8.500 3 0 5-1 7-3M12.500 18.500V22M4 22.300h16" fill="none" stroke={DARK} strokeWidth="1.500" /></> },
    { name: "Filled map", icon: <><path d="M1 2h8l3 2 4-2h6l1 5-3 3v7l-7 2-2 3-4-3-5-2 1-6-2-4z" fill={SOFT} stroke={DARK} strokeWidth="1.200" /><path d="M1 2h8l1 5-4 4-4 0-1-5zM13 11h8l-1 6-8 3v-5z" fill={SKY} stroke={BLUE} strokeWidth="1.200" /></> },
    { name: "Shape map", icon: <><path d="M1 2h8l3 2 4-2h6l1 5-3 3v7l-7 2-2 3-4-3-5-2 1-6-2-4z" fill="#fff" stroke={DARK} strokeWidth="1.200" /><path d="M1 2h8l1 5-4 4-4 0M6 11h15M13 11v5l-1 4 8-3 1-7 2-3-1-5h-6" fill="none" stroke="#2b95e0" strokeWidth="1.400" /></> },
    { name: "Azure map", icon: <><path d="M15-1L2 22l11-5z" fill="#3a9bd9" /><path d="M15-1l6 25-8-7z" fill="#2277bd" /></> },
    { name: "Gauge", icon: <><path d="M.7 16.500a10.800 10.800 0 0121.600 0H16a4.500 4.500 0 00-9 0z" fill="#fff" stroke={DARK} strokeWidth="1.400" /><path d="M6 7.500a10.800 10.800 0 0116.500 9H16a4.500 4.500 0 00-6-4z" fill={SKY} stroke={BLUE} strokeWidth="1.300" /><path d="M11 16.500l5-6" stroke={DARK} strokeWidth="2" /></> },
    { name: "Card", icon: <><rect x=".7" y="3" width="22" height="17" fill="#fff" stroke={DARK} strokeWidth="1.300" /><text x="4" y="15" fontSize="10.500" fill={BLUE}>123</text><path d="M3 17.500h17" stroke={SOFT} /><Bolt /></> },
    { name: "KPI", icon: <><rect x=".7" y="2" width="22" height="18" fill="#fff" stroke={DARK} strokeWidth="1.300" /><path d="M7.500 6l3.500 6H4z" fill={GREEN} /><path d="M12 6h8l-4 6z" fill={ORANGE} /><path d="M3 15.500h17" stroke={GRAY} /></> },
    { name: "Slicer", icon: <><rect x=".7" y=".7" width="21.500" height="21.500" fill="#fff" stroke={DARK} strokeWidth="1.300" /><path d="M1 3h21" stroke={SOFT} strokeWidth="3" /><path d="M1 5h21" stroke={GRAY} /><path d="M5 8.500h4v4H5zM5 15h4v4H5z" fill={SOFT} stroke={GRAY} /><MiniFunnel /></> },
    { name: "Table", icon: <><rect x=".7" y=".7" width="21.600" height="21.600" fill="#fff" stroke={DARK} strokeWidth="1.400" /><path d="M1 3h21" stroke={SOFT} strokeWidth="3" /><path d="M1 5h21M1 11h21M1 16.500h21M8 5v17M15 5v17" stroke={GRAY} /></> },
    { name: "Matrix", icon: <><path d="M1 3h21" stroke={SOFT} strokeWidth="4" /><path d="M1 5h14v12H1z" fill="#fff" /><path d="M15 5h7.300v17.300H1V17h14z" fill={SKY} /><path d="M1 5h21M1 11h21M1 16.500h21M8 5v17M15 5v17" stroke={BLUE} /><rect x=".7" y=".7" width="21.600" height="21.600" fill="none" stroke={DARK} strokeWidth="1.400" /></> },
    { name: "R script", icon: <text x="4" y="18" fontSize="19" fontWeight="700" fill="#2b88c8">R</text> },
    { name: "Python script", icon: <text x="-1" y="17" fontSize="20" fontWeight="600" fill="#2b88c8">Py</text> },
    { name: "Key influencers", icon: <><path d="M1 4.500h15" stroke={BLUE} strokeWidth="1.500" /><circle cx="19" cy="4.500" r="2.800" fill={SKY} stroke={BLUE} /><path d="M1 11h11M1 16h7" stroke={GRAY} strokeWidth="1.300" /><path d="M12 9.500h3v3h-3zM7 14.500h3v3H7z" fill={SOFT} stroke={GRAY} /><Axis /></> },
    { name: "Decomposition tree", icon: <><path d="M9 11h6M15 3.500h-2v15h2M12 11h3" fill="none" stroke={DARK} strokeWidth="1.500" /><Bar x={0.7} y={8.5} w={8} h={5} tone="blue" /><Bar x={14.5} y={1} w={8} h={5} tone="blue" /><Bar x={14.5} y={8.5} w={8} h={5} tone="blue" /><Bar x={14.5} y={16} w={8} h={5} tone="blue" /></> },
    { name: "Narrative", icon: <><path d="M3.500 1h11l5 5v16h-16z" fill="#fff" stroke={DARK} strokeWidth="1.300" /><path d="M14 1v5h5" fill="none" stroke={DARK} /><circle cx="4" cy="9" r="2.300" fill={SKY} stroke={BLUE} /><path d="M8 10.500h8M6 15h9" stroke={BLUE} strokeWidth="1.200" /></> },
    { name: "Goals", icon: <><path d="M5 3H.7v3c0 4 2 5 5 5M18 3h4.300v3c0 4-2 5-5 5" fill="none" stroke={DARK} strokeWidth="1.400" /><path d="M5 1h13v8c0 4-3 6-6.500 6S5 13 5 9z" fill="#fff" stroke={DARK} strokeWidth="1.300" /><path d="M5 1h13v3H5zM6 19h11v3.300H6z" fill={SKY} stroke={BLUE} /><path d="M10 15h3v4h-3z" fill="#fff" stroke={DARK} /></> },
    { name: "Paginated report", icon: <><path d="M2.500-.5h12l6 6v18h-18z" fill="#fff" stroke={DARK} strokeWidth="1.400" /><path d="M14-.5v6h6" fill="none" stroke={DARK} /><path d="M5 13h3v7H5zM10 17h3v3h-3zM15 12h3v8h-3z" fill={DARK} /></> },
    { name: "Button slicer", icon: <><path d="M11 1h10v9H11zM1 11h9v10H1z" fill="#fff" stroke={GRAY} strokeWidth="1.400" /><path d="M7 7h5v5H7z" fill={SKY} /><Bolt /><MiniFunnel /></> },
    { name: "Text slicer", icon: <><path d="M1 1h20v20H1z" fill="#fff" stroke={GRAY} strokeWidth="1.400" /><path d="M5 18L11 4l6 14M7.500 13h7" fill="none" stroke={BLUE} strokeWidth="1.400" /><Bolt /><MiniFunnel /></> },
    { name: "List slicer", icon: <><path d="M1 1h20v20H1z" fill="#fff" stroke={GRAY} strokeWidth="1.400" /><path d="M11 6.500h7M10 15h4" stroke={GRAY} strokeWidth="1.300" /><path d="M4.500 13.500h3v3h-3z" fill={SOFT} stroke={GRAY} /><Bolt /><MiniFunnel /></> },
    { name: "Image", icon: <><rect x=".7" y="3" width="21.600" height="17" fill="#fff" stroke={DARK} strokeWidth="1.400" /><path d="M1.500 19.500V15l6-6 5 5 4-3 5.500 5v3.500z" fill={SKY} stroke={BLUE} /><circle cx="17" cy="7" r="1.900" fill={ORANGE} /></> },
    { name: "ArcGIS map", icon: <><path d="M2 1h20v20H2z" fill="#fff" stroke={BLUE} strokeWidth="1.500" /><path d="M9 20c-1-5 4-5 4-8 0-4 5-2 5-6l4-1v6l-4 3-2 6z" fill={SKY} stroke={BLUE} /><path d="M3-1c-6 0-5 7 0 13 5-6 6-13 0-13z" fill={ORANGE} /><circle cx="3" cy="4" r="1.800" fill="#fff" /><circle cx="19.500" cy="19.500" r="3.700" fill={ORANGE} /><circle cx="21" cy="12.500" r="1.900" fill={ORANGE} /></> },
    { name: "Power Apps", icon: <path d="M7.500 1h8l7 10.500-7 10.500h-8L.5 11.500zM11.500 6L7.500 1M11.500 6l4-5M11.500 17l-4 5M11.500 17l4 5M11.500 6L8 11.500l3.500 5.500 3.500-5.500zM15 11.500l4-5M8 11.500L4 6.500M15 11.500l4 5M8 11.500l-4 5" fill="none" stroke="#9b30a0" strokeWidth="1.200" /> },
    { name: "Power Automate", icon: <path d="M.7 1.500h14l8 9.500-8 9.500h-14L8.500 11zM5 20L16.500 5M10 20L20 8M.7 20L13 2" fill="#fff" stroke="#1a86d8" strokeWidth="1.500" /> },
    { name: "More visuals", icon: <path d="M2 8h2v2H2zM10 8h2v2h-2zM18 8h2v2h-2z" fill={DARK} /> },
];

const DropWell = ({ children, className }: { children: ReactNode; className: string }) => (
    <div className={clsx("flex items-center ml-[5px] mr-[7px] border border-dashed border-[#bebbb8] rounded-xs bg-white text-[14px] whitespace-nowrap", className)}>
        {children}
    </div>
);

const Toggle = ({ label, on }: { label: string; on?: boolean }) => (
    <label className="flex items-center justify-between h-[34px] pl-[15px] pr-[27px] text-[14px]">
        {label}
        <span className="relative flex">
            <input
                type="checkbox"
                defaultChecked={on}
                className="appearance-none w-10 h-5 rounded-full border border-[#797775] bg-white checked:bg-[#117865] checked:border-[#117865]"
            />
            <span className={clsx(
                "absolute inset-0 flex items-center justify-center gap-[3px] text-[11px] pointer-events-none",
                on ? "flex-row-reverse text-white" : "text-[#605e5c]"
            )}>
                <span className={clsx("w-[10px] h-[10px] rounded-full", on ? "bg-white" : "bg-[#605e5c]")} />
                {on ? "On" : "Off"}
            </span>
        </span>
    </label>
);

const VisualizationsPane = () => (
    <aside className="w-[226px] shrink-0 bg-[#f3f2f1] border-l border-[#e1dfdd] text-[#252423]">
        <div className="flex items-center justify-between h-12 pt-[2px] pl-[10px] pr-[9px]">
            <h2 className="text-[18px] font-bold">Visualizations</h2>
            <button aria-label="Collapse visualizations"><DoubleChevron /></button>
        </div>
        <h3 className="pl-[10px] text-[14px] leading-5 font-semibold">Build visual</h3>
        <div className="flex gap-[46px] pl-[10px] mt-1">
            <button aria-label="Build visual" className="w-10 h-10 p-[5px] bg-[#cfcdcb] rounded-xs">
                <svg viewBox="0 0 30 30" className="w-[30px] h-[30px]">
                    <path d="M0 2h24" stroke={DARK} strokeWidth="1.600" />
                    <path d="M1 8h28v9H1zM1 20h28v9H1z" fill="#117865" stroke="#201f1e" strokeWidth="1.800" strokeDasharray="2 1.500" />
                </svg>
            </button>
            <button aria-label="Format visual" className="w-10 h-10">
                <svg viewBox="0 0 32 32" className="w-8 h-8" fill="#fff" stroke={DARK} strokeWidth="1.700">
                    <path d="M12 29.500H1.500V1H14l8 9M14 1v9h8" fill="none" />
                    <path d="M30 11L17 23l3 3 11-14zM17 23c-4-1-5 3-9 6 5 2 11 1 12-3z" />
                </svg>
            </button>
        </div>
        <svg viewBox="0 0 225 12" className="w-full h-3 mt-1" fill="none" stroke="#979593" strokeWidth="1.200">
            <path d="M0 11h20l10-9 10 9h185" />
        </svg>
        <div className="grid grid-cols-6 w-[210px] ml-2 mt-2 pb-[5px]">
            {visuals.map((v) => (
                <button key={v.name} aria-label={v.name} className="flex items-center justify-center h-[35px]">
                    <svg viewBox="0 0 23 23" className="w-[23px] h-[23px] overflow-visible">{v.icon}</svg>
                </button>
            ))}
        </div>
        <div className="pt-[11px] border-t border-[#e1dfdd]">
            <h3 className="pl-[15px] text-[14px] leading-5">Values</h3>
            <DropWell className="h-[35px] mt-[6px] px-3">Add data fields here</DropWell>
            <h3 className="pl-[15px] mt-[14px] text-[14px] leading-5 font-semibold text-[#484644]">Drill through</h3>
            <div className="mt-1">
                <Toggle label="Cross-report" />
                <Toggle label="Keep all filters" on />
            </div>
            <DropWell className="h-8 mt-[6px] px-[10px]">Add drill-through fields here</DropWell>
        </div>
    </aside>
);

const DataPane = () => (
    <aside className="w-[226px] shrink-0 bg-[#f3f2f1] border-l border-[#e1dfdd] text-[#252423]">
        <div className="flex items-center justify-between h-12 pt-[2px] pl-[10px] pr-[9px]">
            <h2 className="text-[18px] font-bold">Data</h2>
            <button aria-label="Collapse data"><DoubleChevron /></button>
        </div>
        <label className="flex items-center gap-2 h-[30px] mt-[9px] ml-[5px] mr-[5px] px-[13px] bg-white border border-[#d2d0ce] border-b-[#605e5c] rounded-sm">
            <svg viewBox="0 0 20 20" className="w-5 h-5 shrink-0" fill="none" stroke="#605e5c" strokeWidth="1.300"><circle cx="9" cy="9" r="7.500" /><path d="M14.500 14.500l4.500 4.500" /></svg>
            <input aria-label="Search data" placeholder="Search" className="w-full bg-transparent outline-none text-[16px] placeholder:text-[#797775]" />
        </label>
        <button className="flex items-center gap-[9px] pl-[19px] mt-[17px] text-[14px] leading-5">
            <svg viewBox="0 0 8 14" className="w-2 h-[14px]" fill="none" stroke={DARK} strokeWidth="1.300"><path d="M1 1l6 6-6 6" /></svg>
            <span className="flex items-center gap-[7px]">
                <svg viewBox="0 0 16 16" className="w-4 h-4" fill="none" stroke={DARK} strokeWidth="1.400"><rect x="1" y="1" width="14" height="14" rx="3" /><path d="M1 5.500h14M1 10.500h14M5.500 1v14M10.500 1v14" /></svg>
                Raw_Data
            </span>
        </button>
    </aside>
);

const PageTabs = () => (
    <div className="relative flex h-11 bg-[#f3f2f1]">
        <button aria-label="Desktop layout" className="flex flex-col items-center w-[30px] ml-3 mt-2">
            <svg viewBox="0 0 25 20" className="w-[25px] h-5" fill="none" stroke="#605e5c" strokeWidth="1.600"><path d="M1 2h23v13H1zM12.500 15v4M8 19h9" /></svg>
            <span className="w-full h-[3px] mt-[7px] rounded-xs bg-[#117865]" />
        </button>
        <button aria-label="Phone layout" className="self-start mt-[6px] ml-8">
            <svg viewBox="0 0 17 26" className="w-[17px] h-[26px]" fill="none" stroke="#605e5c" strokeWidth="1.800"><rect x="1" y="1" width="15" height="24" rx="1" /><path d="M7 21.500h3" /></svg>
        </button>
        <button aria-label="Previous page" disabled className="ml-[26px]">
            <svg viewBox="0 0 6 10" className="w-[6px] h-[10px]"><path d="M6 0v10L0 5z" fill={SOFT} /></svg>
        </button>
        <button aria-label="Next page" disabled className="ml-[22px]">
            <svg viewBox="0 0 6 10" className="w-[6px] h-[10px]"><path d="M0 0v10l6-5z" fill={SOFT} /></svg>
        </button>
        <button className="w-[161px] ml-2 pt-1 bg-white border-l border-l-[#979593] border-b-[5px] border-b-[#117865] text-[14px] font-semibold text-[#201f1e]">
            Final Dashboard
        </button>
        <button aria-label="New page" className="flex items-center justify-center w-[49px] ml-px bg-[#117865]">
            <svg viewBox="0 0 14 14" className="w-[14px] h-[14px]" stroke="#fff" strokeWidth="3"><path d="M7 0v14M0 7h14" /></svg>
        </button>
        <span dir="rtl" className="absolute right-[390px] -top-[14px] z-10 text-[62px] leading-[80px] font-bold whitespace-nowrap text-[#dededd] font-[DejaVu_Sans,sans-serif] pointer-events-none">
            {'خ\u200d5\u200dسات'}
        </span>
    </div>
);

const StatusBar = () => (
    <footer className="flex items-center h-[26px] pl-[5px] pr-[22px] bg-[#f3f2f1] border-t border-[#e1dfdd] text-[14px] leading-5 text-[#484644]">
        <span className="mt-[6px]">Page 1 of 1</span>
        <div className="flex items-center ml-auto mt-1 text-[#605e5c]">
            <button aria-label="Zoom out" className="w-3"><span className="block w-[6px] h-[2px] bg-[#484644]" /></button>
            <span className="relative flex items-center">
                <input
                    type="range" min="0" max="100" defaultValue="34" aria-label="Zoom level"
                    className="appearance-none w-[125px] h-px bg-[#605e5c] [&::-webkit-slider-thumb]:appearance-none [&::-webkit-slider-thumb]:w-[5px] [&::-webkit-slider-thumb]:h-[13px] [&::-webkit-slider-thumb]:bg-[#605e5c]"
                />
                <span className="absolute left-1/2 w-px h-[7px] bg-[#605e5c]" />
            </span>
            <button aria-label="Zoom in" className="ml-[7px]">
                <svg viewBox="0 0 9 9" className="w-[9px] h-[9px]" stroke="#484644" strokeWidth="1.700"><path d="M4.500 0v9M0 4.500h9" /></svg>
            </button>
            <span className="ml-[17px]">73%</span>
            <button aria-label="Fit to page" className="ml-6">
                <svg viewBox="0 0 20 16" className="w-5 h-4" fill="none" stroke="#605e5c" strokeWidth="1.400"><path d="M1 1h18v14H1zM4 6V4h2.500M13.500 4H16v2M16 10v2h-2.500M6.500 12H4v-2" /></svg>
            </button>
        </div>
    </footer>
);

export default function App() {
    return (
        <div className="flex flex-col min-h-screen bg-white overflow-hidden font-[Open_Sans,Noto_Sans,DejaVu_Sans,sans-serif]">
            <TitleBar />
            <MenuBar />
            <Ribbon />
            <main className="flex flex-1">
                <Rail />
                <div className="flex flex-col flex-1 min-w-0">
                    <div className="flex flex-1">
                        <Canvas />
                        <FiltersPane />
                    </div>
                    <PageTabs />
                </div>
                <VisualizationsPane />
                <DataPane />
            </main>
            <StatusBar />
        </div>
    );
}
